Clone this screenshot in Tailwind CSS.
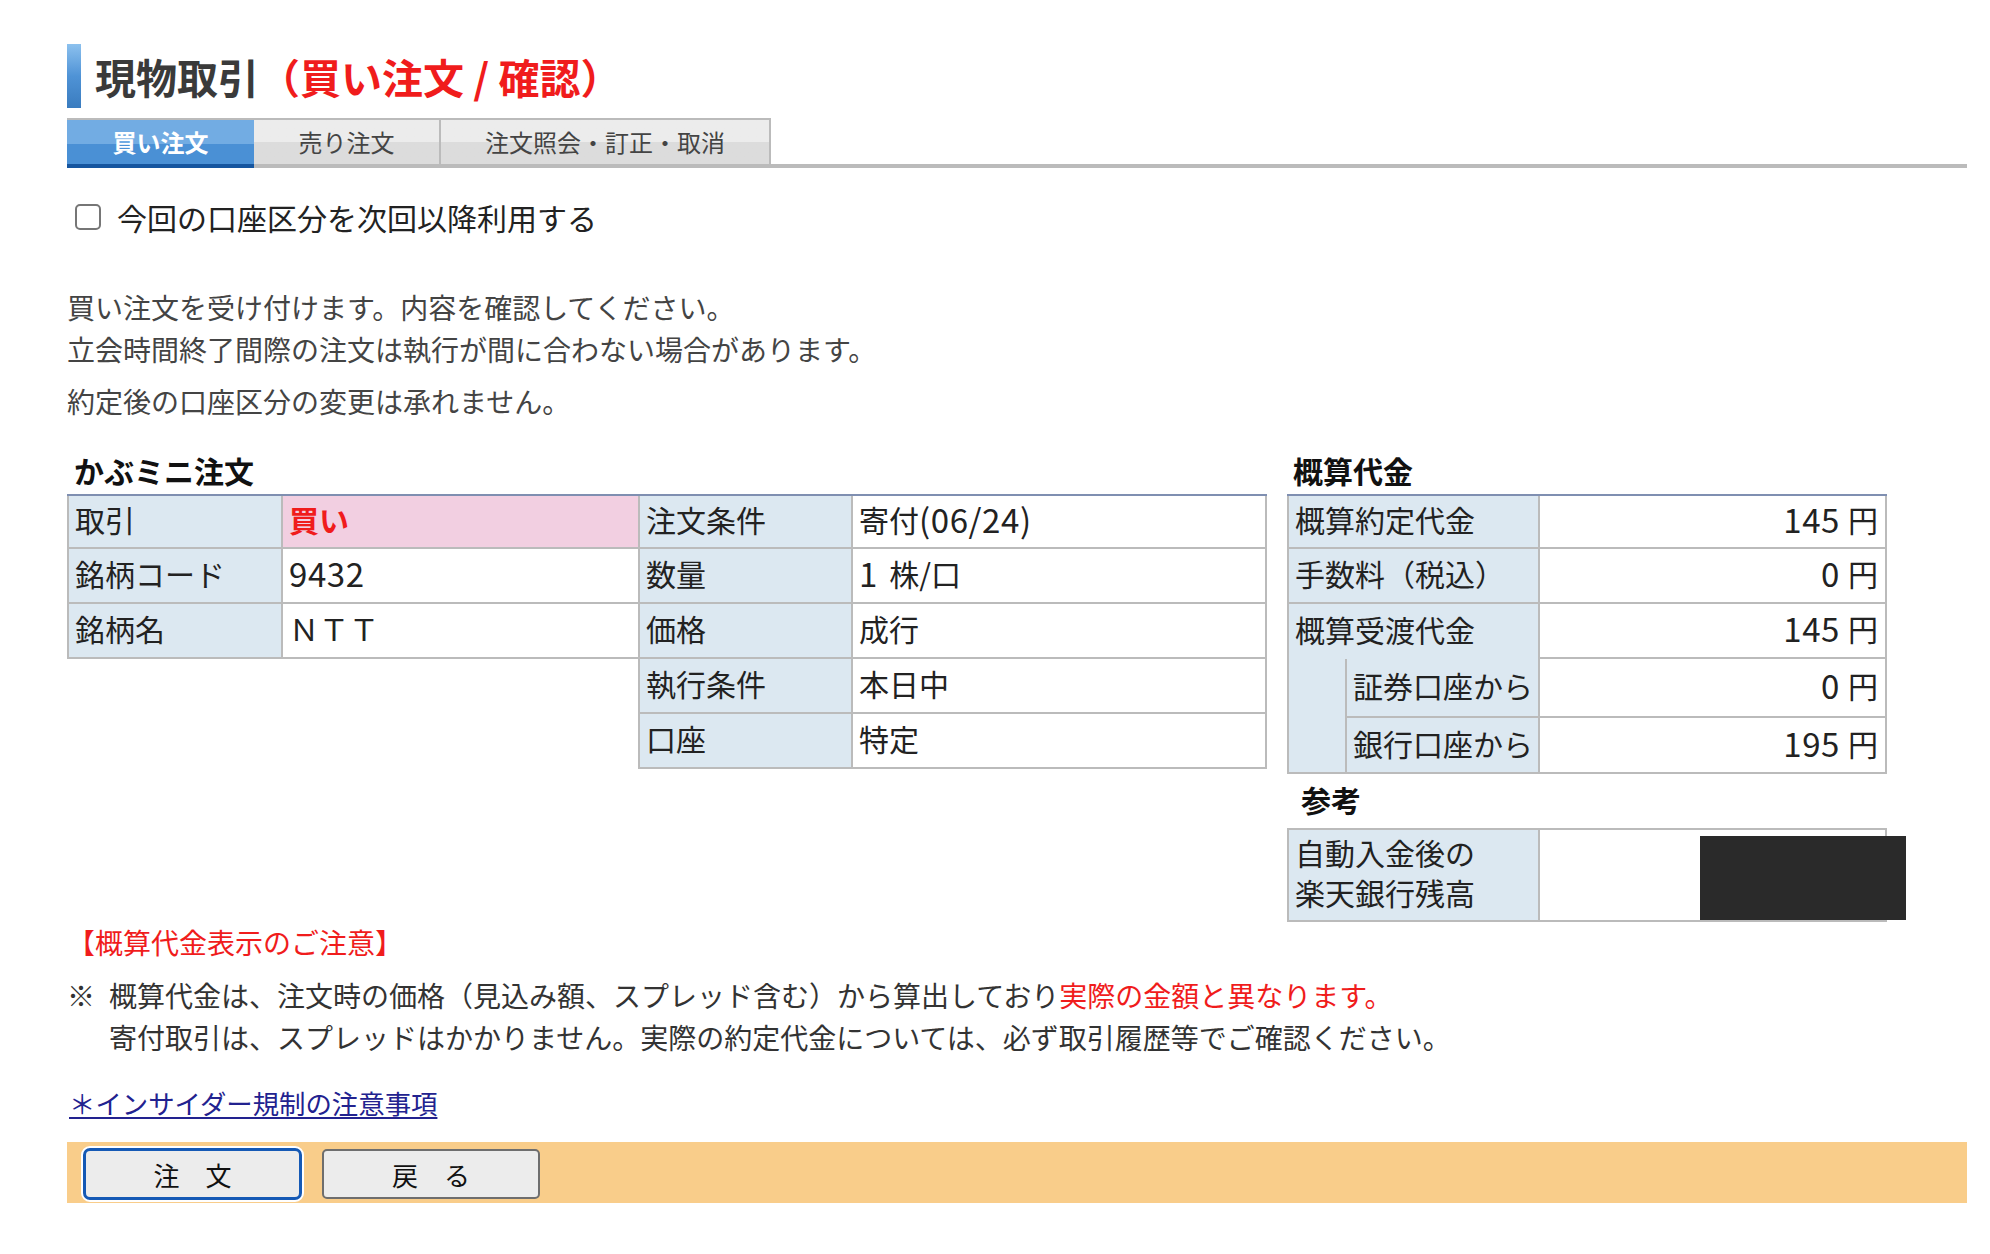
<!DOCTYPE html>
<html lang="ja">
<head>
<meta charset="utf-8">
<title>現物取引</title>
<script src="https://cdn.jsdelivr.net/npm/@tailwindcss/browser@4"></script>
</head>
<body class="bg-white text-[#222] font-['Noto_Sans_CJK_JP','Noto_Sans',sans-serif]">
<div class="w-[1990px] h-[1254px] overflow-hidden pl-[67px] pr-[23px] pt-[44px]">

  <!-- title -->
  <div class="flex items-center h-[64px]">
    <div class="w-[14px] h-[64px] bg-linear-to-b from-[#8cc1ee] via-[#4f93d6] to-[#3a7cbf]"></div>
    <h1 class="ml-[14px] text-[41px] leading-[54px] font-bold text-[#3a3a3a] whitespace-nowrap">現物取引<span class="text-[#f01c1c]">（買い注文 / 確認）</span></h1>
  </div>

  <!-- tabs -->
  <div class="mt-[10px] flex h-[50px] border-b-[4px] border-[#bbbbbb]">
    <div class="relative w-[187px] h-[50px] border-t-[2px] border-[#bbbbbb] flex items-center justify-center text-white font-bold text-[24px] bg-linear-to-b from-[#72ace3] from-50% to-[#4a90d5] to-50%">
      <span class="pb-[4px]">買い注文</span>
      <div class="absolute left-0 right-0 bottom-0 h-[4px] bg-[#15559f]"></div>
    </div>
    <div class="w-[187px] h-[46px] border-t-[2px] border-r-[2px] border-[#bbbbbb] flex items-center justify-center text-[24px] text-[#444] bg-linear-to-b from-[#ececec] from-50% to-[#dcdcdc] to-50%">売り注文</div>
    <div class="w-[330px] h-[46px] border-t-[2px] border-r-[2px] border-[#bbbbbb] flex items-center justify-center text-[24px] text-[#444] bg-linear-to-b from-[#ececec] from-50% to-[#dcdcdc] to-50%">注文照会・訂正・取消</div>
  </div>

  <!-- checkbox -->
  <label class="mt-[36px] ml-[8px] flex items-center h-[26px] text-[30px] text-[#222]">
    <span class="w-[26px] h-[26px] rounded-[5px] border-[2px] border-[#767676] bg-white shrink-0"></span>
    <span class="ml-[16px] whitespace-nowrap">今回の口座区分を次回以降利用する</span>
  </label>

  <!-- intro -->
  <div class="mt-[56px] text-[28px] leading-[42px] text-[#444]">
    <p>買い注文を受け付けます。内容を確認してください。</p>
    <p>立会時間終了間際の注文は執行が間に合わない場合があります。</p>
    <p class="mt-[10px]">約定後の口座区分の変更は承れません。</p>
  </div>

  <!-- tables -->
  <div class="mt-[27px] flex items-start">
    <div class="w-[1200px] shrink-0">
      <h2 class="pl-[7px] h-[45px] text-[30px] leading-[42px] font-bold text-[#111]">かぶミニ注文</h2>
      <div class="flex items-start text-[30px] leading-[40px]">
        <div class="w-[571px] shrink-0 border-t-[2px] border-[#7f8fb1]">
          <div class="grid grid-cols-[216px_355px] h-[53px] border-b-[2px] border-[#bbbbbb]">
            <div class="bg-[#dce8f1] border-l-[2px] border-r-[2px] border-[#bbbbbb] pl-[6px] pb-[5px] flex items-center">取引</div>
            <div class="bg-[#f2cfe1] pl-[6px] pb-[5px] flex items-center font-bold text-[#f01c1c]">買い</div>
          </div>
          <div class="grid grid-cols-[216px_355px] h-[55px] border-b-[2px] border-[#bbbbbb]">
            <div class="bg-[#dce8f1] border-l-[2px] border-r-[2px] border-[#bbbbbb] pl-[6px] pb-[5px] flex items-center">銘柄コード</div>
            <div class="pl-[6px] pb-[5px] flex items-center text-[33px] tracking-[0.6px]">9432</div>
          </div>
          <div class="grid grid-cols-[216px_355px] h-[55px] border-b-[2px] border-[#bbbbbb]">
            <div class="bg-[#dce8f1] border-l-[2px] border-r-[2px] border-[#bbbbbb] pl-[6px] pb-[5px] flex items-center">銘柄名</div>
            <div class="pl-[6px] pb-[5px] flex items-center">ＮＴＴ</div>
          </div>
        </div>
        <div class="w-[629px] shrink-0 border-t-[2px] border-[#7f8fb1]">
          <div class="grid grid-cols-[215px_414px] h-[53px] border-b-[2px] border-[#bbbbbb]">
            <div class="bg-[#dce8f1] border-l-[2px] border-r-[2px] border-[#bbbbbb] pl-[6px] pb-[5px] flex items-center">注文条件</div>
            <div class="border-r-[2px] border-[#bbbbbb] pl-[6px] pb-[5px] flex items-center whitespace-nowrap">寄付<span class="text-[33px] tracking-[0.6px]">(06/24)</span></div>
          </div>
          <div class="grid grid-cols-[215px_414px] h-[55px] border-b-[2px] border-[#bbbbbb]">
            <div class="bg-[#dce8f1] border-l-[2px] border-r-[2px] border-[#bbbbbb] pl-[6px] pb-[5px] flex items-center">数量</div>
            <div class="border-r-[2px] border-[#bbbbbb] pl-[6px] pb-[5px] flex items-center whitespace-nowrap"><span class="text-[33px] mr-[12px]">1</span>株/口</div>
          </div>
          <div class="grid grid-cols-[215px_414px] h-[55px] border-b-[2px] border-[#bbbbbb]">
            <div class="bg-[#dce8f1] border-l-[2px] border-r-[2px] border-[#bbbbbb] pl-[6px] pb-[5px] flex items-center">価格</div>
            <div class="border-r-[2px] border-[#bbbbbb] pl-[6px] pb-[5px] flex items-center">成行</div>
          </div>
          <div class="grid grid-cols-[215px_414px] h-[55px] border-b-[2px] border-[#bbbbbb]">
            <div class="bg-[#dce8f1] border-l-[2px] border-r-[2px] border-[#bbbbbb] pl-[6px] pb-[5px] flex items-center">執行条件</div>
            <div class="border-r-[2px] border-[#bbbbbb] pl-[6px] pb-[5px] flex items-center">本日中</div>
          </div>
          <div class="grid grid-cols-[215px_414px] h-[55px] border-b-[2px] border-[#bbbbbb]">
            <div class="bg-[#dce8f1] border-l-[2px] border-r-[2px] border-[#bbbbbb] pl-[6px] pb-[5px] flex items-center">口座</div>
            <div class="border-r-[2px] border-[#bbbbbb] pl-[6px] pb-[5px] flex items-center">特定</div>
          </div>
        </div>
      </div>
    </div>

    <div class="relative ml-[20px] w-[600px] shrink-0">
      <h2 class="pl-[6px] h-[45px] text-[30px] leading-[42px] font-bold text-[#111]">概算代金</h2>
      <div class="text-[30px] leading-[40px] border-t-[2px] border-[#7f8fb1]">
        <div class="grid grid-cols-[253px_347px] h-[53px] border-b-[2px] border-[#bbbbbb]">
          <div class="bg-[#dce8f1] border-l-[2px] border-r-[2px] border-[#bbbbbb] pl-[6px] pb-[5px] flex items-center">概算約定代金</div>
          <div class="border-r-[2px] border-[#bbbbbb] pr-[7px] pb-[5px] flex items-center justify-end"><span class="text-[33px] tracking-[0.6px] mr-[8px]">145</span>円</div>
        </div>
        <div class="grid grid-cols-[253px_347px] h-[55px] border-b-[2px] border-[#bbbbbb]">
          <div class="bg-[#dce8f1] border-l-[2px] border-r-[2px] border-[#bbbbbb] pl-[6px] pb-[5px] flex items-center">手数料（税込）</div>
          <div class="border-r-[2px] border-[#bbbbbb] pr-[7px] pb-[5px] flex items-center justify-end"><span class="text-[33px] tracking-[0.6px] mr-[8px]">0</span>円</div>
        </div>
        <div class="grid grid-cols-[253px_347px] h-[55px] border-b-[2px] border-[#bbbbbb]">
          <div class="bg-[#dce8f1] border-l-[2px] border-r-[2px] border-[#bbbbbb] pl-[6px] pb-[5px] flex items-center -mb-[2px] z-10">概算受渡代金</div>
          <div class="border-r-[2px] border-[#bbbbbb] pr-[7px] pb-[5px] flex items-center justify-end"><span class="text-[33px] tracking-[0.6px] mr-[8px]">145</span>円</div>
        </div>
        <div class="grid grid-cols-[58px_195px_347px] h-[59px] border-b-[2px] border-[#bbbbbb]">
          <div class="bg-[#dce8f1] border-l-[2px] border-[#bbbbbb] -mb-[2px] z-10"></div>
          <div class="bg-[#dce8f1] border-l-[2px] border-r-[2px] border-[#bbbbbb] pl-[6px] pb-[5px] flex items-center whitespace-nowrap">証券口座から</div>
          <div class="border-r-[2px] border-[#bbbbbb] pr-[7px] pb-[5px] flex items-center justify-end"><span class="text-[33px] tracking-[0.6px] mr-[8px]">0</span>円</div>
        </div>
        <div class="grid grid-cols-[58px_195px_347px] h-[56px] border-b-[2px] border-[#bbbbbb]">
          <div class="bg-[#dce8f1] border-l-[2px] border-[#bbbbbb]"></div>
          <div class="bg-[#dce8f1] border-l-[2px] border-r-[2px] border-[#bbbbbb] pl-[6px] pb-[5px] flex items-center whitespace-nowrap">銀行口座から</div>
          <div class="border-r-[2px] border-[#bbbbbb] pr-[7px] pb-[5px] flex items-center justify-end"><span class="text-[33px] tracking-[0.6px] mr-[8px]">195</span>円</div>
        </div>
      </div>
      <h2 class="pl-[14px] h-[54px] text-[30px] leading-[50px] font-bold text-[#111]">参考</h2>
      <div class="relative grid grid-cols-[253px_347px] h-[94px] border-t-[2px] border-b-[2px] border-[#bbbbbb] text-[30px] leading-[40px]">
        <div class="bg-[#dce8f1] border-l-[2px] border-r-[2px] border-[#bbbbbb] pl-[6px] pb-[6px] flex flex-col justify-center"><p>自動入金後の</p><p>楽天銀行残高</p></div>
        <div class="border-r-[2px] border-[#bbbbbb]"></div>
        <div class="absolute left-[413px] top-[6px] w-[206px] h-[84px] bg-[#2a2a2a]"></div>
      </div>
    </div>
  </div>

  <!-- notes -->
  <div class="mt-[2px] text-[28px] leading-[42px] text-[#333]">
    <p class="text-[#f01c1c] -mt-[3px]">【概算代金表示のご注意】</p>
    <div class="mt-[11px] flex">
      <span class="w-[42px] shrink-0">※</span>
      <div>
        <p class="whitespace-nowrap">概算代金は、注文時の価格（見込み額、スプレッド含む）から算出しており<span class="text-[#f01c1c]">実際の金額と異なります。</span></p>
        <p class="whitespace-nowrap">寄付取引は、スプレッドはかかりません。実際の約定代金については、必ず取引履歴等でご確認ください。</p>
      </div>
    </div>
  </div>

  <a href="#" class="block mt-[27px] ml-[2px] w-fit text-[26.4px] leading-[36px] text-[#22228f] underline decoration-[2px] underline-offset-[3px]">＊インサイダー規制の注意事項</a>

  <!-- buttons -->
  <div class="mt-[21px] h-[61px] bg-[#f9cd8a] flex items-center pl-[15px] pt-[3px] text-[26px] text-[#111]">
    <button class="w-[221px] h-[54px] rounded-[8px] bg-[#ececec] border-[4px] border-[#1559b5] outline-[2px] outline-white -outline-offset-[1px] flex items-center justify-center">注　文</button>
    <button class="ml-[19px] w-[218px] h-[50px] rounded-[5px] bg-[#ececec] border-[2px] border-[#6e6e6e] flex items-center justify-center">戻　る</button>
  </div>
</div>
</body>
</html>
